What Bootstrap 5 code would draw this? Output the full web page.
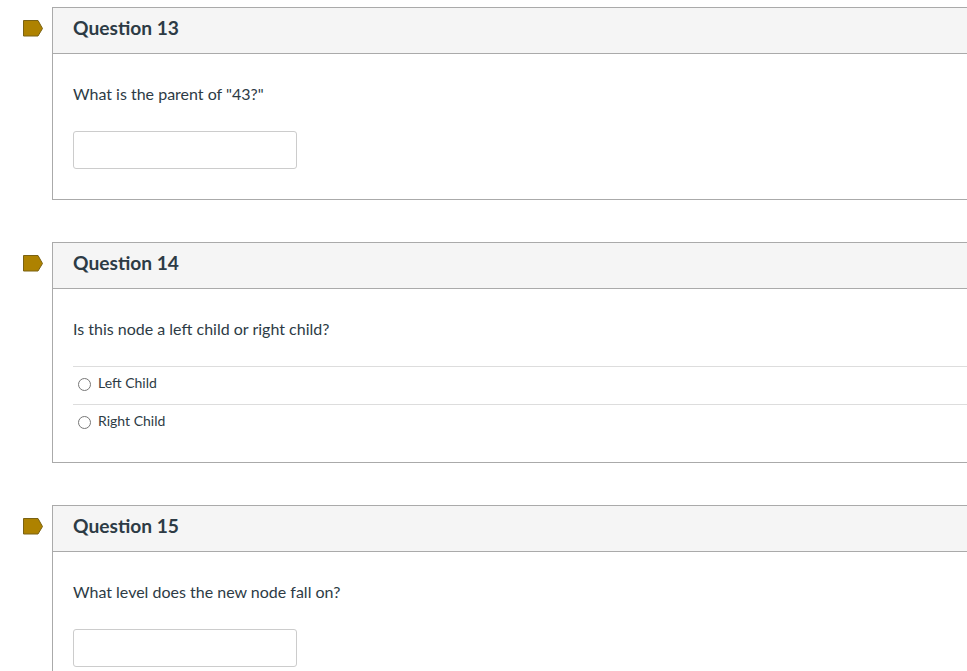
<!DOCTYPE html>
<html lang="en">
<head>
<meta charset="utf-8">
<title>Quiz</title>
<link rel="stylesheet" href="https://cdn.jsdelivr.net/npm/bootstrap@5.3.0/dist/css/bootstrap.min.css">
<style>
html, body { height: 671px; overflow: hidden; }
body { font-family: Lato, "Liberation Sans", sans-serif; color: #2d3b45; background: #fff; padding-top: 7px; }
.quiz-item { display: flex; align-items: flex-start; margin-bottom: 42px; }
.flag-cell { width: 52px; flex: none; padding: 13px 0 0 23px; line-height: 0; }
.q-box { flex: 1; min-width: 0; margin-right: -2px; border: 1px solid #aaa; background: #fff; }
.q-head { height: 46px; background: #f5f5f5; border-bottom: 1px solid #aaa; padding: 0 20px 5px; display: flex; align-items: center; font-size: 19.2px; font-weight: 700; color: #2d3b45; }
.q-body { padding: 29px 0 30px 20px; }
.q-text { font-size: 16px; line-height: 22px; margin: 0; height: 22px; }
.q-answer { display: block; width: 224px; height: 38px; margin-top: 26px; border: 1px solid #ccc; border-radius: 3px; padding: 0 8px; background: #fff; }
.q-opts { margin: 26px 0 -10px 0; padding: 0; list-style: none; }
.q-opts li { height: 38px; border-top: 1px solid #ddd; display: flex; align-items: center; gap: 7px; font-size: 14px; padding-left: 5px; padding-bottom: 6px; }
.q-opts input { appearance: none; margin: 4px 0 0; width: 13px; height: 13px; border: 1px solid #777; border-radius: 50%; background: #fff; flex: none; }
</style>
</head>
<body>
<div class="quiz-item">
  <div class="flag-cell"><svg width="20" height="17" viewBox="0 0 20 17"><path d="M.5.5H15L19.5 8.5 15 16H.5Z" fill="#ae8200" stroke="#7a6213"/></svg></div>
  <section class="q-box">
    <div class="q-head">Question 13</div>
    <div class="q-body">
      <p class="q-text">What is the parent of "43?"</p>
      <input class="q-answer" type="text" aria-label="Answer">
    </div>
  </section>
</div>
<div class="quiz-item">
  <div class="flag-cell"><svg width="20" height="17" viewBox="0 0 20 17"><path d="M.5.5H15L19.5 8.5 15 16H.5Z" fill="#ae8200" stroke="#7a6213"/></svg></div>
  <section class="q-box">
    <div class="q-head">Question 14</div>
    <div class="q-body">
      <p class="q-text">Is this node a left child or right child?</p>
      <ul class="q-opts">
        <li><input type="radio" name="q14" aria-label="Left Child"><span>Left Child</span></li>
        <li><input type="radio" name="q14" aria-label="Right Child"><span>Right Child</span></li>
      </ul>
    </div>
  </section>
</div>
<div class="quiz-item">
  <div class="flag-cell"><svg width="20" height="17" viewBox="0 0 20 17"><path d="M.5.5H15L19.5 8.5 15 16H.5Z" fill="#ae8200" stroke="#7a6213"/></svg></div>
  <section class="q-box">
    <div class="q-head">Question 15</div>
    <div class="q-body">
      <p class="q-text">What level does the new node fall on?</p>
      <input class="q-answer" type="text" aria-label="Answer">
    </div>
  </section>
</div>
</body>
</html>
